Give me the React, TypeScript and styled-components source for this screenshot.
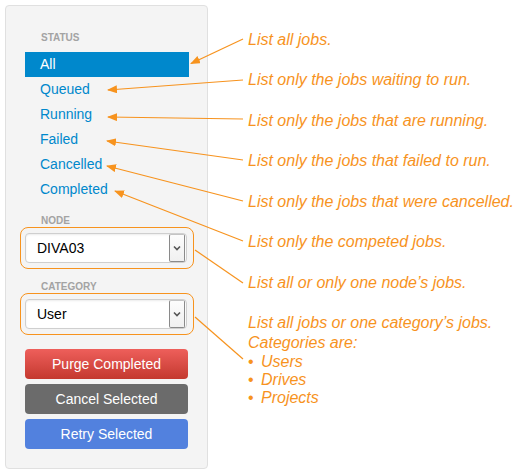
import React from 'react';
import styled, { createGlobalStyle } from 'styled-components';

const ORANGE = '#f7931e';

const GlobalStyle = createGlobalStyle`
  html, body { margin: 0; padding: 0; background: #fff; }
  body { font-family: "Liberation Sans", Arial, Helvetica, sans-serif; }
`;

const Page = styled.div`
  position: relative;
  width: 528px;
  height: 474px;
  box-sizing: border-box;
  padding: 5px;
  display: flex;
  gap: 40px;
`;

const Panel = styled.aside`
  width: 203px;
  height: 464px;
  box-sizing: border-box;
  background: #f4f4f4;
  border: 1px solid #e0e0e0;
  border-radius: 4px;
  padding: 25px 19px 19px;
  display: flex;
  flex-direction: column;
`;

const SectionLabel = styled.div<{ $top: number }>`
  margin-top: ${(p) => p.$top}px;
  padding-left: 16px;
  font-size: 10px;
  font-weight: bold;
  line-height: 14px;
  color: #a3a3a3;
  text-transform: uppercase;
`;

const StatusList = styled.ul`
  list-style: none;
  margin: 7px 0 0;
  padding: 0;
  display: flex;
  flex-direction: column;
`;

const StatusItem = styled.li<{ $active?: boolean }>`
  height: 25px;
  line-height: 25px;
  padding-left: 15px;
  width: 164px;
  box-sizing: border-box;
  font-size: 14px;
  color: ${(p) => (p.$active ? '#fff' : '#0088cc')};
  background: ${(p) => (p.$active ? '#0088cc' : 'transparent')};
`;

const SelectWrap = styled.div`
  position: relative;
  margin-top: 5px;
  width: 162px;
  &::after {
    content: '';
    position: absolute;
    top: -6px;
    left: -5px;
    right: -7px;
    bottom: -6px;
    border: 1px solid ${ORANGE};
    border-radius: 8px;
    pointer-events: none;
  }
`;

const SelectBox = styled.div`
  width: 162px;
  height: 30px;
  box-sizing: border-box;
  border: 1px solid #cfcfcf;
  border-radius: 4px;
  background: #fff;
  box-shadow: inset 0 1px 2px rgba(0, 0, 0, 0.08);
  display: flex;
  align-items: center;
`;

const SelectValue = styled.span`
  flex: 1;
  padding-left: 11px;
  font-size: 14px;
  color: #000;
`;

const Caret = styled.span`
  width: 16px;
  height: 28px;
  box-sizing: border-box;
  margin-right: 1px;
  border: 1px solid #8a8a8a;
  border-top-color: #c4c4c4;
  border-radius: 2px;
  background: linear-gradient(#fcfcfc, #f0f0f0);
  display: flex;
  align-items: center;
  justify-content: center;
`;

const ButtonStack = styled.div`
  margin-top: 20px;
  display: flex;
  flex-direction: column;
  gap: 5px;
`;

const ActionButton = styled.button<{ $bg: string }>`
  width: 163px;
  height: 30px;
  border: none;
  border-radius: 4px;
  background: ${(p) => p.$bg};
  color: #fff;
  font-family: inherit;
  font-size: 14px;
  padding: 0;
  text-align: center;
`;

const Notes = styled.div`
  padding-top: 24.5px;
  display: flex;
  flex-direction: column;
  gap: 20.5px;
`;

const Note = styled.div`
  font-size: 16px;
  line-height: 20px;
  font-style: italic;
  color: ${ORANGE};
  white-space: nowrap;
`;

const Bullets = styled.ul`
  list-style: none;
  margin: 0;
  padding: 0;
  line-height: 18px;
`;

const Bullet = styled.li`
  display: flex;
  &::before {
    content: '•';
    width: 13px;
    font-style: normal;
  }
`;

const Overlay = styled.svg`
  position: absolute;
  top: 0;
  left: 0;
  pointer-events: none;
`;

const Chevron = () => (
  <svg width="8" height="6" viewBox="0 0 8 6">
    <path d="M1 1.5 L4 4.5 L7 1.5" fill="none" stroke="#555" strokeWidth="1.6" />
  </svg>
);

const Select = ({ value }: { value: string }) => (
  <SelectWrap>
    <SelectBox>
      <SelectValue>{value}</SelectValue>
      <Caret>
        <Chevron />
      </Caret>
    </SelectBox>
  </SelectWrap>
);

const statuses = ['All', 'Queued', 'Running', 'Failed', 'Cancelled', 'Completed'];

const arrows: [number, number, number, number, boolean][] = [
  [243, 39, 191, 63.5, true],
  [243, 80, 108, 90, true],
  [243, 119, 108, 117, true],
  [243, 160, 107, 141, true],
  [243, 201, 107, 166, true],
  [243, 241, 115, 191, true],
  [195, 250, 243, 283, false],
  [195, 317, 243, 359, false],
];

export default function App() {
  return (
    <Page>
      <GlobalStyle />
      <Panel>
        <SectionLabel $top={0}>Status</SectionLabel>
        <StatusList>
          {statuses.map((s, i) => (
            <StatusItem key={s} $active={i === 0}>
              {s}
            </StatusItem>
          ))}
        </StatusList>
        <SectionLabel $top={12}>Node</SectionLabel>
        <Select value="DIVA03" />
        <SectionLabel $top={17}>Category</SectionLabel>
        <Select value="User" />
        <ButtonStack>
          <ActionButton $bg="linear-gradient(#ee5f5b, #c4392f)">Purge Completed</ActionButton>
          <ActionButton $bg="#6b6b6b">Cancel Selected</ActionButton>
          <ActionButton $bg="#5281de">Retry Selected</ActionButton>
        </ButtonStack>
      </Panel>
      <Notes>
        <Note>List all jobs.</Note>
        <Note>List only the jobs waiting to run.</Note>
        <Note>List only the jobs that are running.</Note>
        <Note>List only the jobs that failed to run.</Note>
        <Note>List only the jobs that were cancelled.</Note>
        <Note>List only the competed jobs.</Note>
        <Note>List all or only one node’s jobs.</Note>
        <Note>
          List all jobs or one category’s jobs.
          <br />
          Categories are:
          <Bullets>
            <Bullet>Users</Bullet>
            <Bullet>Drives</Bullet>
            <Bullet>Projects</Bullet>
          </Bullets>
        </Note>
      </Notes>
      <Overlay width="528" height="474" viewBox="0 0 528 474">
        <defs>
          <marker
            id="head"
            viewBox="0 0 10 8"
            refX="9"
            refY="4"
            markerWidth="10"
            markerHeight="8"
            markerUnits="userSpaceOnUse"
            orient="auto"
          >
            <path d="M0 0 L10 4 L0 8 Z" fill={ORANGE} />
          </marker>
        </defs>
        {arrows.map(([x1, y1, x2, y2, head], i) => (
          <line
            key={i}
            x1={x1}
            y1={y1}
            x2={x2}
            y2={y2}
            stroke={ORANGE}
            strokeWidth="1.2"
            markerEnd={head ? 'url(#head)' : undefined}
          />
        ))}
      </Overlay>
    </Page>
  );
}
